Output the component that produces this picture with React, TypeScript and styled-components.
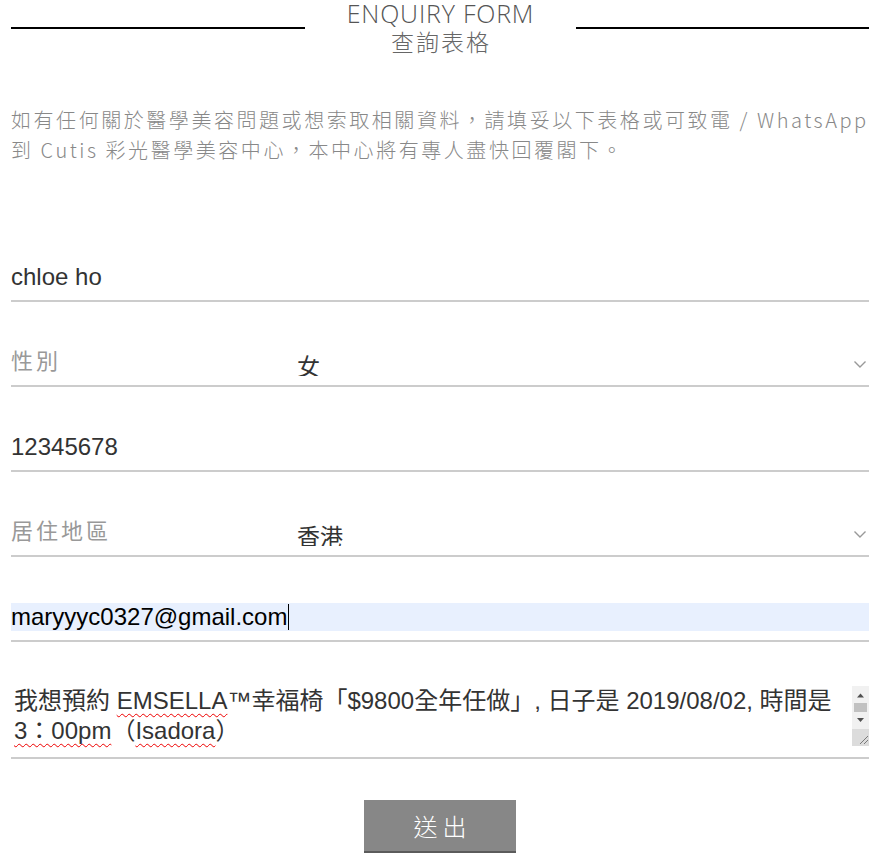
import React from "react";
import styled, { createGlobalStyle } from "styled-components";

const Global = createGlobalStyle`
  html, body { margin: 0; padding: 0; background: #fff; }
  body { font-family: "Liberation Sans", "Noto Sans CJK TC", sans-serif; }
  * { box-sizing: border-box; }
`;

const CJK = `"Noto Sans CJK TC", "Noto Sans", sans-serif`;
const LATIN_CJK = `"Liberation Sans", "Noto Sans CJK TC", sans-serif`;

const Page = styled.main`
  width: 858px;
  margin-left: 11px;
`;

const Header = styled.header`
  display: grid;
  grid-template-columns: 1fr 271px 1fr;
  align-items: start;
`;

const Rule = styled.div`
  height: 2px;
  background: #000;
  margin-top: 27px;
`;

const TitleBlock = styled.div`
  text-align: center;
`;

const TitleEn = styled.h1`
  margin: 0;
  font-family: "Open Sans", sans-serif;
  font-weight: 300;
  font-size: 25px;
  line-height: 26px;
  color: #555;
  letter-spacing: 0.8px;
  padding-left: 1px;
`;

const TitleZh = styled.h2`
  margin: 0;
  font-family: ${CJK};
  font-weight: 300;
  font-size: 23px;
  line-height: 30px;
  color: #666;
  letter-spacing: 2px;
  padding-left: 2px;
`;

const Intro = styled.p`
  margin: 49px 0 0;
  font-family: ${CJK};
  font-weight: 300;
  font-size: 20px;
  line-height: 30px;
  letter-spacing: 2.55px;
  color: #888;
  white-space: nowrap;
`;

const Form = styled.form`
  margin-top: 52px;
`;

const Field = styled.div<{ $top?: number; $bottom?: number }>`
  display: flex;
  align-items: center;
  padding-top: ${(p) => p.$top ?? 46}px;
  padding-bottom: ${(p) => p.$bottom ?? 9}px;
  border-bottom: 2px solid #ccc;
`;

const TextInput = styled.input`
  flex: 1;
  height: 28px;
  padding: 0;
  border: none;
  outline: none;
  font-family: ${LATIN_CJK};
  font-size: 24px;
  color: #333;
  background: transparent;
`;

const FilledBox = styled.div`
  flex: 1;
  height: 28px;
  display: flex;
  align-items: center;
  font-family: ${LATIN_CJK};
  font-size: 24px;
  color: #000;
  background: #e8f0fe;
  white-space: nowrap;
`;

const Caret = styled.span`
  display: inline-block;
  width: 1px;
  height: 26px;
  background: #000;
  margin-left: 1px;
`;

const Label = styled.label`
  width: 286px;
  flex: none;
  height: 28px;
  font-family: ${CJK};
  font-size: 22px;
  line-height: 23px;
  letter-spacing: 3px;
  color: #999;
`;

const Select = styled.select`
  flex: 1;
  height: 28px;
  padding: 0;
  border: none;
  outline: none;
  appearance: none;
  -webkit-appearance: none;
  background: transparent;
  font-family: ${CJK};
  font-size: 23px;
  color: #333;
`;

const Chevron = styled.svg`
  flex: none;
  width: 12px;
  height: 7px;
  margin: 4px 3px 0 0;
`;

const AreaWrap = styled.div`
  position: relative;
  flex: 1;
  height: 60px;
  padding: 0 20px 0 3px;
  font-family: ${LATIN_CJK};
  font-size: 24px;
  line-height: 30px;
  color: #333;
  white-space: nowrap;
`;

const Misspelled = styled.span`
  text-decoration: underline wavy #e00;
  text-decoration-thickness: 1px;
  text-underline-offset: 4px;
  text-decoration-skip-ink: none;
`;

const Scrollbar = styled.svg`
  position: absolute;
  right: 0;
  top: 0;
  width: 17px;
  height: 60px;
`;

const Submit = styled.button`
  display: block;
  margin: 41px auto 0;
  width: 152px;
  height: 53px;
  padding: 0 0 0 5px;
  border: none;
  border-bottom: 2px solid #5b5b5b;
  background: #878787;
  color: #fff;
  font-family: ${CJK};
  font-weight: 300;
  font-size: 24px;
  letter-spacing: 5px;
`;

const ChevronIcon = () => (
  <Chevron viewBox="0 0 12 7">
    <polyline points="0.5,0.5 6,6 11.5,0.5" fill="none" stroke="#999" strokeWidth="1.4" />
  </Chevron>
);

export default function App() {
  return (
    <>
      <Global />
      <Page>
        <Header>
          <Rule />
          <TitleBlock>
            <TitleEn>ENQUIRY FORM</TitleEn>
            <TitleZh>查詢表格</TitleZh>
          </TitleBlock>
          <Rule />
        </Header>
        <Intro>
          如有任何關於醫學美容問題或想索取相關資料，請填妥以下表格或可致電 / WhatsApp
          <br />
          到 Cutis 彩光醫學美容中心，本中心將有專人盡快回覆閣下。
        </Intro>
        <Form onSubmit={(e) => e.preventDefault()}>
          <Field>
            <TextInput defaultValue="chloe ho" />
          </Field>
          <Field>
            <Label>性別</Label>
            <Select defaultValue="女">
              <option>男</option>
              <option>女</option>
            </Select>
            <ChevronIcon />
          </Field>
          <Field>
            <TextInput defaultValue="12345678" />
          </Field>
          <Field>
            <Label>居住地區</Label>
            <Select defaultValue="香港">
              <option>香港</option>
              <option>澳門</option>
              <option>其他</option>
            </Select>
            <ChevronIcon />
          </Field>
          <Field>
            <FilledBox>
              maryyyc0327@gmail.com
              <Caret />
            </FilledBox>
          </Field>
          <Field $top={44} $bottom={11}>
            <AreaWrap>
              我想預約 <Misspelled>EMSELLA</Misspelled>™幸福椅「$9800全年任做」, 日子是 2019/08/02, 時間是
              <br />
              <Misspelled>3：00pm</Misspelled>（<Misspelled>Isadora</Misspelled>）
              <Scrollbar viewBox="0 0 17 60">
                <rect x="0" y="0" width="17" height="60" fill="#f1f1f1" />
                <polygon points="5,11.5 12,11.5 8.5,7.5" fill="#505050" />
                <rect x="2" y="17" width="13" height="9" fill="#c1c1c1" />
                <polygon points="5,32 12,32 8.5,36" fill="#505050" />
                <rect x="0" y="43" width="17" height="17" fill="#dcdcdc" />
                <line x1="16" y1="50" x2="8" y2="58" stroke="#7a7a7a" strokeWidth="1" />
                <line x1="16" y1="54" x2="12" y2="58" stroke="#7a7a7a" strokeWidth="1" />
              </Scrollbar>
            </AreaWrap>
          </Field>
          <Submit type="submit">送出</Submit>
        </Form>
      </Page>
    </>
  );
}
